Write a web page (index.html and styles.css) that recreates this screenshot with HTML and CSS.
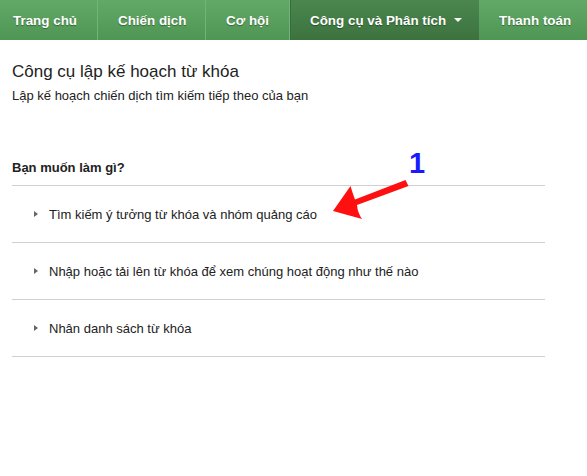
FILE: index.html
```html
<!DOCTYPE html>
<html lang="vi">
<head>
<meta charset="utf-8">
<link rel="stylesheet" href="styles.css">
</head>
<body>
<nav class="nav">
  <a class="tab first">Trang chủ</a>
  <a class="tab">Chiến dịch</a>
  <a class="tab">Cơ hội</a>
  <a class="tab active">Công cụ và Phân tích <span class="caret"></span></a>
  <a class="tab last">Thanh toán</a>
</nav>
<main class="content">
  <h1 class="title">Công cụ lập kế hoạch từ khóa</h1>
  <p class="subtitle">Lập kế hoạch chiến dịch tìm kiếm tiếp theo của bạn</p>
  <h2 class="question">Bạn muốn làm gì?</h2>
  <ul class="options">
    <li class="option"><span class="tri"></span>Tìm kiếm ý tưởng từ khóa và nhóm quảng cáo</li>
    <li class="option"><span class="tri"></span>Nhập hoặc tải lên từ khóa để xem chúng hoạt động như thế nào</li>
    <li class="option"><span class="tri"></span>Nhân danh sách từ khóa</li>
  </ul>
</main>
<div class="annot">
  <span class="num">1</span>
  <svg class="arrow" width="587" height="476" viewBox="0 0 587 476">
    <path d="M405.5,180 L355,199.5 Q352.5,193 350.5,186 L333,211 L362,219 Q357.5,212.5 357,205 L408.5,186 Z" fill="#ff1010"/>
  </svg>
</div>
</body>
</html>
```
FILE: styles.css
```css
html, body {
  margin: 0;
  padding: 0;
  background: #fff;
}
body {
  width: 587px;
  height: 476px;
  position: relative;
  overflow: hidden;
  font-family: "Liberation Sans", Arial, sans-serif;
  color: #222;
}
.nav {
  display: flex;
  height: 40px;
  background: linear-gradient(#62a866, #4f9553);
  overflow: hidden;
}
.tab {
  display: flex;
  align-items: center;
  flex-shrink: 0;
  padding: 0 20px;
  height: 40px;
  box-sizing: border-box;
  color: #fff;
  font-weight: bold;
  font-size: 13.4px;
  text-shadow: 0 1px 1px rgba(0,0,0,0.35);
  border-right: 1px solid #74b378;
  white-space: nowrap;
}
.tab.first {
  padding-left: 13px;
  width: 98px;
}
.tab:nth-child(2) { width: 108px; }
.tab:nth-child(3) { width: 84px; justify-content: center; padding: 0; }
.tab.active {
  background: linear-gradient(#4a874d, #3d723f);
  border-right: none;
  width: 189px;
  box-shadow: inset 1px 0 0 #3a6b3c;
}
.tab.last {
  border-right: none;
  flex: 1 1 auto;
  min-width: 0;
}
.caret {
  display: inline-block;
  width: 0;
  height: 0;
  margin-left: 8px;
  border-left: 4px solid transparent;
  border-right: 4px solid transparent;
  border-top: 4px solid #fff;
}
.content {
  padding: 0 42px 0 12px;
}
.title {
  margin: 22px 0 0;
  font-size: 17px;
  font-weight: normal;
  line-height: 20px;
  color: #222;
}
.subtitle {
  margin: 6px 0 0;
  font-size: 13px;
  line-height: 16px;
  color: #222;
}
.question {
  margin: 56px 0 0;
  font-size: 13px;
  font-weight: bold;
  line-height: 16px;
  padding-bottom: 9px;
  border-bottom: 1px solid #d0d0d0;
  color: #222;
}
.options {
  list-style: none;
  margin: 0;
  padding: 0;
}
.option {
  display: flex;
  align-items: center;
  height: 57px;
  border-bottom: 1px solid #d0d0d0;
  font-size: 13px;
  color: #222;
  padding-left: 22px;
  box-sizing: border-box;
}
.tri {
  display: inline-block;
  width: 0;
  height: 0;
  border-top: 3.5px solid transparent;
  border-bottom: 3.5px solid transparent;
  border-left: 4px solid #666;
  margin-right: 11px;
}
.annot {
  position: absolute;
  left: 0;
  top: 0;
  width: 587px;
  height: 476px;
  pointer-events: none;
}
.arrow {
  position: absolute;
  left: 0;
  top: 0;
}
.num {
  position: absolute;
  left: 409px;
  top: 147px;
  font-size: 29px;
  font-weight: bold;
  line-height: 32px;
  color: #1a1aff;
}
```
